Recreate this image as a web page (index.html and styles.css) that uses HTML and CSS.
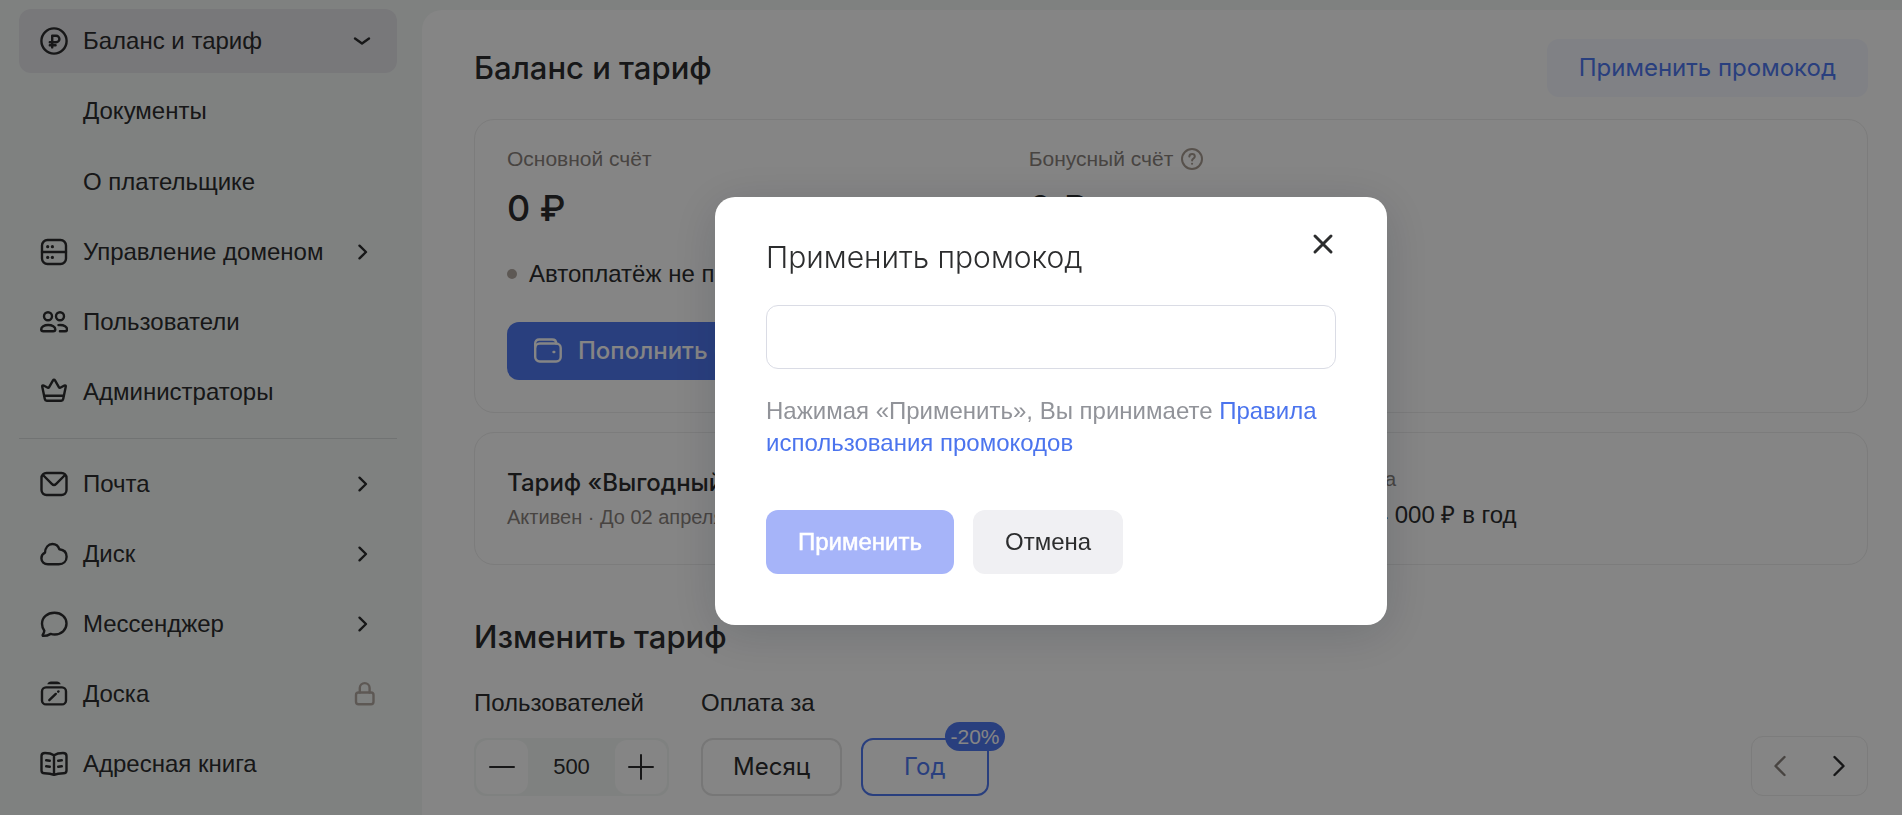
FILE: index.html
```html
<!DOCTYPE html>
<html lang="ru">
<head>
    <meta charset="UTF-8">
    <meta name="viewport" content="width=device-width, initial-scale=1.0">
    <title>Баланс и тариф</title>
    <link rel="stylesheet" href="styles.css">
</head>
<body>
    <div class="layout">
        <nav class="sidebar">
            <a class="menu-item active" href="#balance">
                <svg class="icon" viewBox="0 0 28 28"><circle cx="14" cy="14" r="12.6"/><path d="M12.2 20.4V8.8h4a3.2 3.2 0 0 1 0 6.4H9.8M9.8 18.2h5.8"/></svg>
                <span>Баланс и тариф</span>
                <svg class="icon chevron" viewBox="0 0 28 28"><path d="M6 11.500l7 5 7-5"/></svg>
            </a>
            <div class="submenu">
                <a class="menu-item" href="#documents"><span>Документы</span></a>
                <a class="menu-item" href="#payer"><span>О плательщике</span></a>
            </div>
            <a class="menu-item" href="#domain">
                <svg class="icon" viewBox="0 0 28 28"><rect x="2" y="2" width="24" height="24" rx="5.500"/><path d="M2 14h24"/><g class="dots"><circle cx="7.700" cy="8.700" r="1.600"/><circle cx="12.400" cy="8.700" r="1.600"/><circle cx="7.700" cy="19.400" r="1.600"/><circle cx="12.400" cy="19.400" r="1.600"/></g></svg>
                <span>Управление доменом</span>
                <svg class="icon chevron" viewBox="0 0 28 28"><path d="M10.500 7.700l6.500 6.300-6.500 6.300"/></svg>
            </a>
            <a class="menu-item" href="#users">
                <svg class="icon" viewBox="0 0 28 28"><circle cx="8" cy="8.200" r="4"/><circle cx="20" cy="8.200" r="4"/><path d="M8.200 17c-4 0-7 1.900-7 4.300 0 1.400.9 2 2.200 2h9.700c1.300 0 2.200-.6 2.200-2 0-2.400-3-4.300-7.100-4.300z"/><path d="M18.500 17.100c.5-.1 1-.1 1.600-.1 4 0 7 1.900 7 4.300 0 1.400-.9 2-2.200 2h-5"/></svg>
                <span>Пользователи</span>
            </a>
            <a class="menu-item" href="#admins">
                <svg class="icon" viewBox="0 0 28 28"><path d="M4.800 21L2.200 8.600c-.2-.9.600-1.500 1.400-1.100l4.200 2.200c.5.200.9.100 1.200-.4l4-6.900c.5-.8 1.500-.8 2 0l4 6.900c.3.500.7.600 1.200.4l4.200-2.200c.8-.4 1.600.2 1.400 1.100L23.200 21c-.2 1-.9 1.700-2 1.700H6.800c-1.100 0-1.800-.7-2-1.700z"/><path d="M4.500 17.700h19"/></svg>
                <span>Администраторы</span>
            </a>
            <hr class="divider">
            <a class="menu-item" href="#mail">
                <svg class="icon" viewBox="0 0 28 28"><rect x="1.500" y="3" width="25" height="22" rx="5"/><path d="M3 5l8.800 8.800c1.300 1.300 3.100 1.300 4.400 0L25 5"/></svg>
                <span>Почта</span>
                <svg class="icon chevron" viewBox="0 0 28 28"><path d="M10.500 7.700l6.500 6.300-6.500 6.300"/></svg>
            </a>
            <a class="menu-item" href="#disk">
                <svg class="icon" viewBox="0 0 28 28"><path d="M8 24.300c-3.900 0-6.600-2.600-6.600-6.100 0-2.600 1.300-4.400 3.600-5.500C5.300 7.600 8.200 4 12.400 4c3.400 0 5.900 2 7 5.300 4.600.5 7.200 3.500 7.200 7.500 0 4.400-3.200 7.500-7.800 7.500z"/></svg>
                <span>Диск</span>
                <svg class="icon chevron" viewBox="0 0 28 28"><path d="M10.500 7.700l6.500 6.300-6.500 6.300"/></svg>
            </a>
            <a class="menu-item" href="#messenger">
                <svg class="icon" viewBox="0 0 28 28"><path d="M14.500 2.800c7 0 12 4.600 12 10.800s-5 10.900-11.800 10.900c-1.500 0-2.800-.2-4-.6-2.200 1.300-4.800 2-7.200 2-.9 0-1.100-.7-.6-1.300.8-1 1.300-2.500 1.400-3.900C2.900 18.700 2 16.400 2 13.800 2 7.400 7.200 2.800 14.500 2.800z"/></svg>
                <span>Мессенджер</span>
                <svg class="icon chevron" viewBox="0 0 28 28"><path d="M10.500 7.700l6.500 6.300-6.500 6.300"/></svg>
            </a>
            <a class="menu-item" href="#board">
                <svg class="icon" viewBox="0 0 28 28"><rect x="2" y="7.400" width="24" height="17" rx="4"/><path class="board-top" d="M7.300 4.200c.6-1.600 1.900-2.700 3.700-2.700h6c1.800 0 3.100 1.100 3.700 2.700z"/><path d="M9.300 20.200l6.500-6.300M18.200 11.700l.3-.3"/></svg>
                <span>Доска</span>
                <svg class="icon lock" viewBox="0 0 28 28"><rect x="7" y="12.500" width="17.500" height="11.800" rx="2.500"/><path d="M10.800 12.500V8a4.900 4.900 0 0 1 9.800 0v4.500"/></svg>
            </a>
            <a class="menu-item" href="#contacts">
                <svg class="icon" viewBox="0 0 28 28"><path d="M14 5.200c-2.600-1.700-5.800-2.200-9-2.200C3 3 1.500 4.200 1.500 6v14.500c0 1.700 1.200 2.700 3 2.700 3.500 0 6.700.3 9.500 1.700 2.800-1.400 6-1.700 9.500-1.700 1.800 0 3-1 3-2.700V6c0-1.800-1.500-3-3.500-3-3.200 0-6.400.5-9 2.200zM14 5.200v19.700M6.200 10.300l3.600.5M6.200 16.300l3.600.5M21.800 10.300l-3.600.5M21.800 16.300l-3.600.5"/></svg>
                <span>Адресная книга</span>
            </a>
        </nav>

        <main class="content">
            <header class="page-header">
                <h1>Баланс и тариф</h1>
                <button class="btn btn-light" type="button">Применить промокод</button>
            </header>

            <section class="card accounts">
                <div>
                    <p class="caption">Основной счёт</p>
                    <p class="amount">0 ₽</p>
                    <p class="autopay">Автоплатёж не подключён</p>
                    <button class="btn btn-primary" type="button">
                        <svg class="icon" viewBox="0 0 28 28"><rect x="1.200" y="6.500" width="25.500" height="18" rx="4.500"/><path d="M1.200 10V6.500c0-2.500 1.500-4 4-4h13c2.500 0 4 1.300 4 4"/><path d="M19.500 15h.8"/></svg>
                        Пополнить баланс
                    </button>
                </div>
                <div>
                    <p class="caption">Бонусный счёт
                        <svg class="icon help" viewBox="0 0 22 22"><circle cx="11" cy="11" r="10"/><path d="M8.300 8.600c.1-1.500 1.200-2.500 2.800-2.500s2.700 1 2.700 2.400c0 2-2.700 2-2.700 4"/><path d="M11 15.800h.1"/></svg>
                    </p>
                    <p class="amount">0 ₽</p>
                </div>
            </section>

            <section class="card plan">
                <div>
                    <h3>Тариф «Выгодный»</h3>
                    <p class="caption">Активен · До 02 апреля</p>
                </div>
                <div class="cost">
                    <p class="caption">Цена</p>
                    <p class="price">234 000 ₽ в год</p>
                </div>
            </section>

            <h2>Изменить тариф</h2>
            <div class="options">
                <div class="option">
                    <label for="count">Пользователей</label>
                    <div class="stepper">
                        <button type="button" aria-label="Меньше"><svg class="icon" viewBox="0 0 28 28"><path d="M2 14h24"/></svg></button>
                        <input id="count" type="text" value="500">
                        <button type="button" aria-label="Больше"><svg class="icon" viewBox="0 0 28 28"><path d="M2 14h24M14 2v24"/></svg></button>
                    </div>
                </div>
                <div class="option">
                    <span>Оплата за</span>
                    <div class="periods">
                        <button class="period" type="button">Месяц</button>
                        <button class="period selected" type="button">Год<span class="badge">-20%</span></button>
                    </div>
                </div>
                <div class="pager">
                    <button class="prev" type="button" aria-label="Назад"><svg class="icon" viewBox="0 0 28 28"><path d="M18.500 5l-9 9 9 9"/></svg></button>
                    <button type="button" aria-label="Вперёд"><svg class="icon" viewBox="0 0 28 28"><path d="M9.500 5l9 9-9 9"/></svg></button>
                </div>
            </div>
        </main>
    </div>

    <div class="overlay">
        <form class="modal" role="dialog" aria-labelledby="promo-title">
            <button class="close" type="button" aria-label="Закрыть"><svg class="icon" viewBox="0 0 28 28"><path d="M6 6l16 16M22 6L6 22"/></svg></button>
            <h2 class="modal-title" id="promo-title">Применить промокод</h2>
            <input class="promo-input" type="text" aria-labelledby="promo-title">
            <p class="terms">Нажимая «Применить», Вы принимаете <a href="#rules">Правила использования промокодов</a></p>
            <div class="actions">
                <button class="apply" type="submit" disabled>Применить</button>
                <button class="cancel" type="button">Отмена</button>
            </div>
        </form>
    </div>
</body>
</html>
```

FILE: styles.css
```css
* {
    margin: 0;
    padding: 0;
    box-sizing: border-box;
}
body {
    background-color: #f4f8f6;
    color: #2c2d2e;
    font-family: "Liberation Sans", Arial, sans-serif;
    font-size: 24px;
    line-height: 32px;
}
button,
input {
    font: inherit;
    color: inherit;
    background: none;
    border: none;
}
button {
    cursor: pointer;
}
a {
    color: inherit;
    text-decoration: none;
}
.icon {
    width: 28px;
    height: 28px;
    flex: none;
    display: block;
    fill: none;
    stroke: currentColor;
    stroke-width: 2.4;
    stroke-linecap: round;
    stroke-linejoin: round;
}
.layout {
    display: flex;
    height: 100vh;
    overflow: hidden;
}
/* Sidebar */
.sidebar {
    width: 422px;
    flex: none;
    padding: 9px 25px 0 19px;
    display: flex;
    flex-direction: column;
    gap: 6px;
}
.menu-item {
    display: flex;
    align-items: center;
    gap: 15px;
    height: 64px;
    flex: none;
    padding: 0 20px 0 21px;
    border-radius: 12px;
}
.menu-item.active {
    background-color: #e6e6ea;
}
.menu-item .chevron,
.menu-item .lock {
    margin-left: auto;
}
.menu-item .lock {
    color: #b3a9a2;
}
.dots,
.board-top {
    fill: currentColor;
    stroke: none;
}
.submenu {
    display: flex;
    flex-direction: column;
    gap: 7px;
}
.submenu .menu-item {
    padding-left: 64px;
}
.divider {
    border: none;
    border-top: 1px solid #d9dddc;
    margin: 8px 0 7px;
}
/* Content */
.content {
    flex: 1;
    margin-top: 10px;
    padding: 29px 34px 0 52px;
    background-color: #ffffff;
    border-radius: 20px 0 0 0;
}
.page-header {
    display: flex;
    justify-content: space-between;
    align-items: center;
    margin-bottom: 22px;
}
h1,
h2,
h3,
.amount,
.btn,
.period {
    font-family: Inter, Roboto, sans-serif;
    font-weight: 500;
}
h1,
h2 {
    font-size: 31px;
    line-height: 40px;
}
.btn {
    display: flex;
    align-items: center;
    height: 58px;
    padding: 0 32px;
    border-radius: 12px;
}
.btn-light {
    background-color: #f5f7ff;
    color: #5079f2;
    font-weight: 400;
}
.btn-primary {
    gap: 16px;
    padding: 0 27px;
    background-color: #5079f2;
    color: #ffffff;
}
.card {
    display: grid;
    padding: 0 32px;
    border: 1px solid #ededed;
    border-radius: 20px;
}
.accounts {
    grid-template-columns: 11fr 17fr;
    height: 294px;
    padding-top: 23px;
    margin-bottom: 19px;
}
.plan {
    grid-template-columns: 19fr 11fr;
    height: 133px;
    padding-top: 32px;
    margin-bottom: 52px;
}
.caption {
    display: flex;
    align-items: center;
    gap: 8px;
    font-size: 20px;
    color: #8a837e;
}
.accounts .caption {
    font-size: 21px;
}
.cost {
    margin-top: -2px;
}
.cost .caption {
    margin-bottom: 4px;
}
.help {
    width: 22px;
    height: 22px;
    stroke-width: 2;
    color: #a89c92;
}
.amount {
    margin: 11px 0 28px;
    font-size: 36px;
    line-height: 44px;
}
.autopay {
    display: flex;
    align-items: center;
    gap: 12px;
    margin-bottom: 32px;
}
.autopay::before {
    content: "";
    width: 10px;
    height: 10px;
    border-radius: 50%;
    background-color: #b3a9a2;
}
h3 {
    font-size: 24px;
    line-height: 36px;
}
/* Plan options */
.options {
    display: flex;
    gap: 32px;
    margin-top: 30px;
}
.option {
    display: flex;
    flex-direction: column;
    gap: 19px;
}
.stepper {
    display: flex;
    width: 195px;
    height: 58px;
    padding: 2px;
    border-radius: 12px;
    background-color: #f4f8f6;
}
.stepper button {
    display: flex;
    align-items: center;
    justify-content: center;
    width: 52px;
    border-radius: 12px;
    background-color: #ffffff;
}
.stepper .icon {
    stroke-width: 2;
}
.stepper input {
    flex: 1;
    width: 0;
    font-size: 22px;
    text-align: center;
}
.periods {
    display: flex;
    gap: 19px;
}
.period {
    position: relative;
    height: 58px;
    padding: 0 30px;
    border: 2px solid #e4e4e4;
    border-radius: 12px;
    font-weight: 400;
}
.period.selected {
    padding: 0 41px;
    border-color: #5079f2;
    color: #5079f2;
}
.badge {
    position: absolute;
    top: -18px;
    right: -18px;
    padding: 0 5px;
    border-radius: 15px;
    background-color: #5079f2;
    color: #ffffff;
    font: 21px/29px "Liberation Sans", Arial, sans-serif;
}
.pager {
    display: flex;
    align-items: center;
    align-self: flex-end;
    gap: 31px;
    height: 60px;
    margin-left: auto;
    padding: 0 14px;
    border: 1px solid #ededed;
    border-radius: 12px;
}
.pager .prev {
    color: #8a837e;
}
/* Promo code dialog */
.overlay {
    position: fixed;
    inset: 0;
    display: flex;
    align-items: center;
    justify-content: center;
    padding: 7px 0 0 200px;
    background-color: rgba(0, 0, 0, 0.48);
}
.modal {
    position: relative;
    width: 672px;
    padding: 40px 51px 51px;
    border-radius: 20px;
    background-color: #ffffff;
    box-shadow: 0 8px 48px rgba(0, 16, 36, 0.16);
}
.modal-title {
    margin-bottom: 28px;
    font-size: 30px;
    font-weight: 300;
}
.close {
    position: absolute;
    top: 33px;
    right: 50px;
}
.close .icon {
    stroke-width: 3;
}
.promo-input {
    display: block;
    width: 100%;
    height: 64px;
    padding: 0 16px;
    border: 1px solid #dadce5;
    border-radius: 12px;
}
.terms {
    margin: 26px 0 51px;
    color: #919399;
}
.terms a {
    color: #4b74ee;
}
.actions {
    display: flex;
    gap: 19px;
}
.actions button {
    height: 64px;
    padding: 0 32px;
    border-radius: 12px;
}
.actions .apply {
    background-color: #a6b4f9;
    color: #ffffff;
    -webkit-text-stroke: 0.5px #ffffff;
}
.actions .cancel {
    background-color: #f0f0f3;
}
```
